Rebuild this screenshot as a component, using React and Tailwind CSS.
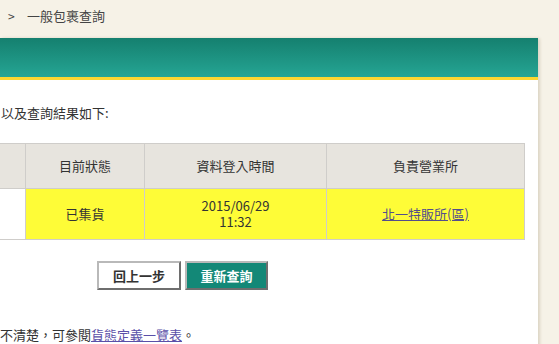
export default function App() {
  const font = { fontFamily: '"Noto Sans CJK TC", "Noto Sans", sans-serif' };
  return (
    <div
      className="w-[559px] h-[344px] overflow-hidden bg-[#f6f2e7] text-[13px] text-[#333]"
      style={font}
    >
      {/* Breadcrumb */}
      <div className="h-[32px] flex items-center pl-[8px] text-[#444]">
        <span className="text-[12px] w-[19px]">&gt;</span>
        <span>一般包裹查詢</span>
      </div>

      {/* Panel */}
      <div className="mt-[6px] w-[538px] rounded-tr-[2px] bg-white shadow-[2px_0_3px_rgba(120,100,60,0.2)]">
        <div className="h-[42px] bg-gradient-to-b from-[#15806f] to-[#25a594] border-b-[3px] border-[#fcd630]" />

        <div className="pt-[23px] pb-[20px]">
          <p className="pl-[1px] leading-[20px]">以及查詢結果如下:</p>

          <table className="mt-[20px] -ml-[75px] border-collapse text-center">
            <thead>
              <tr className="h-[45px] bg-[#e7e4de]">
                <th className="w-[100px] border border-[#cfcdca] font-normal"></th>
                <th className="w-[119px] border border-[#cfcdca] font-normal">目前狀態</th>
                <th className="w-[182px] border border-[#cfcdca] font-normal">資料登入時間</th>
                <th className="w-[198px] border border-[#cfcdca] font-normal">負責營業所</th>
              </tr>
            </thead>
            <tbody>
              <tr className="h-[51px]">
                <td className="border border-[#cfcdca] bg-white"></td>
                <td className="border border-[#cfcdca] bg-[#fefc37]">已集貨</td>
                <td className="border border-[#cfcdca] bg-[#fefc37] leading-[16px]">
                  2015/06/29
                  <br />
                  11:32
                </td>
                <td className="border border-[#cfcdca] bg-[#fefc37]">
                  <a className="underline text-[#544e8c]" href="#">
                    北一特販所(區)
                  </a>
                </td>
              </tr>
            </tbody>
          </table>

          <div className="mt-[21px] ml-[97px] flex gap-[4px]">
            <button className="w-[84px] h-[29px] bg-white border-2 border-t-[#b9b9b9] border-l-[#b9b9b9] border-b-[#6e6e6e] border-r-[#6e6e6e] font-bold text-[#333]">
              回上一步
            </button>
            <button className="w-[83px] h-[29px] bg-[#138877] border-2 border-t-[#b9b9b9] border-l-[#b9b9b9] border-b-[#6e6e6e] border-r-[#6e6e6e] font-bold text-white">
              重新查詢
            </button>
          </div>

          <p className="mt-[35px] leading-[20px]">
            不清楚，可參閱
            <a className="underline text-[#5a4fa8]" href="#">
              貨態定義一覽表
            </a>
            。
          </p>
        </div>
      </div>
    </div>
  );
}
